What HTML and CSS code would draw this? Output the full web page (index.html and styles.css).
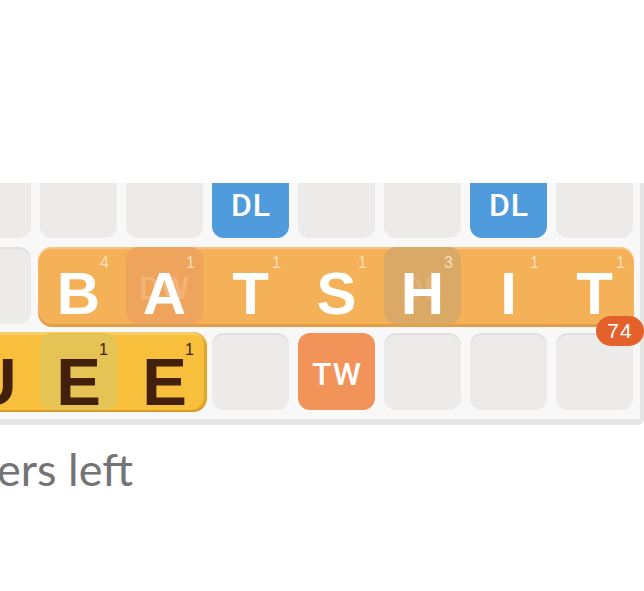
FILE: index.html
```html
<!DOCTYPE html>
<html lang="en">
<head>
<meta charset="utf-8">
<title>Board</title>
<link rel="stylesheet" href="styles.css">
</head>
<body>
<main class="screen">
  <div class="top-space"></div>

  <section class="board-window">
    <div class="board">
      <!-- row 1 -->
      <div class="cell"></div>
      <div class="cell"></div>
      <div class="cell"></div>
      <div class="cell cell--dl cell--top"><span class="cell-label">DL</span></div>
      <div class="cell"></div>
      <div class="cell"></div>
      <div class="cell cell--dl cell--top"><span class="cell-label">DL</span></div>
      <div class="cell"></div>

      <!-- row 2 -->
      <div class="cell"></div>
      <div class="word word--played">
        <div class="tile"><span class="tile-letter">B</span><span class="tile-score">4</span></div>
        <div class="tile tile--dw"><span class="tile-under">DW</span><span class="tile-letter">A</span><span class="tile-score">1</span></div>
        <div class="tile"><span class="tile-letter">T</span><span class="tile-score">1</span></div>
        <div class="tile"><span class="tile-letter">S</span><span class="tile-score">1</span></div>
        <div class="tile tile--dl"><span class="tile-under">DL</span><span class="tile-letter">H</span><span class="tile-score">3</span></div>
        <div class="tile"><span class="tile-letter">I</span><span class="tile-score">1</span></div>
        <div class="tile"><span class="tile-letter">T</span><span class="tile-score">1</span></div>
        <span class="word-score">74</span>
      </div>

      <!-- row 3 -->
      <div class="word word--pending">
        <div class="tile"><span class="tile-letter">U</span></div>
        <div class="tile tile--dl"><span class="tile-letter">E</span><span class="tile-score">1</span></div>
        <div class="tile"><span class="tile-letter">E</span><span class="tile-score">1</span></div>
      </div>
      <div class="cell"></div>
      <div class="cell cell--tw"><span class="cell-label">TW</span></div>
      <div class="cell"></div>
      <div class="cell"></div>
      <div class="cell"></div>
    </div>
  </section>

  <p class="letters-left">ers left</p>
</main>
</body>
</html>
```

FILE: styles.css
```css
* {
  box-sizing: border-box;
}

html,
body {
  margin: 0;
  padding: 0;
  background: #ffffff;
}

body {
  width: 644px;
  height: 591px;
  overflow: hidden;
  font-family: "Liberation Sans", Arial, sans-serif;
}

.screen {
  display: flex;
  flex-direction: column;
}

.top-space {
  height: 183px;
  background: #ffffff;
}

/* visible slice of the game board */
.board-window {
  overflow: hidden;
}

.board {
  margin-top: -22px;
  margin-left: -55px;
  width: 699px;
  padding: 0 7px 9px 9px;
  background: #f8f8f8;
  border-right: 4px solid #e5e5e5;
  border-bottom: 6px solid #e6e6e6;
  border-bottom-right-radius: 6px;
  display: grid;
  grid-template-columns: repeat(8, 77px);
  grid-template-rows: repeat(3, 77px);
  gap: 9px;
}

.cell {
  border-radius: 12px;
  background: #ecebe9;
  box-shadow: inset 0 2px 1px rgba(0, 0, 0, 0.05);
  display: flex;
  align-items: center;
  justify-content: center;
}

.cell--dl {
  background: #4f9bdb;
  box-shadow: none;
}

.cell--tw {
  background: #f2935a;
  box-shadow: none;
}

.cell-label {
  margin-top: 4px;
  font-family: Roboto, "Liberation Sans", sans-serif;
  font-weight: 500;
  font-size: 32px;
  line-height: 1;
  letter-spacing: 1px;
  padding-left: 1px;
  color: #ffffff;
}

.cell--top .cell-label {
  margin-top: 10px;
}

/* words laid on the board */
.word {
  position: relative;
  display: grid;
  grid-template-columns: repeat(var(--len), 77px);
  grid-template-rows: 77px;
  gap: 9px;
  border-radius: 14px;
}

.word--played {
  --len: 7;
  grid-column: span 7;
  margin: 0 -1px 0 -2px;
  padding: 0 1px 0 2px;
  background: #f5b158;
  box-shadow: inset 0 2px 0 rgba(255, 255, 255, 0.25), 0 3px 0 #e39d47;
}

.word--pending {
  --len: 3;
  grid-column: span 3;
  margin: -1px -4px 0 0;
  padding: 1px 4px 0 0;
  background: #f7bf3c;
  box-shadow: inset 0 3px 0 rgba(255, 255, 255, 0.25), inset -3px 0 0 #e2a52a, 0 2px 0 #d99a22;
}

.tile {
  position: relative;
  height: 77px;
  display: flex;
  justify-content: center;
  border-radius: 12px;
}

.tile-letter {
  position: relative;
  font-weight: 700;
  font-size: 60px;
  line-height: 60px;
  padding-top: 17px;
  color: #ffffff;
}

.tile-score {
  position: absolute;
  top: 8px;
  right: 8px;
  font-size: 16px;
  line-height: 1;
  color: rgba(255, 240, 220, 0.75);
}

.tile-under {
  position: absolute;
  inset: 0;
  display: flex;
  align-items: center;
  justify-content: center;
  padding-top: 4px;
  font-family: Roboto, "Liberation Sans", sans-serif;
  font-weight: 500;
  font-size: 32px;
  letter-spacing: 1px;
}

.word--played .tile--dw {
  background: #eea45d;
}

.word--played .tile--dw .tile-under {
  color: #f3b577;
}

.word--played .tile--dl {
  background: #d9a965;
}

.word--played .tile--dl .tile-under {
  color: #e0b378;
}

.word--pending .tile--dl {
  background: #e6c355;
}

.word--pending .tile-letter {
  font-size: 67px;
  line-height: 56px;
  padding-top: 21px;
  color: #43200c;
}

.word--pending .tile-score {
  top: 9px;
  right: 9px;
  color: #43200c;
}

.word-score {
  position: absolute;
  right: -10px;
  bottom: -22px;
  height: 30px;
  min-width: 48px;
  padding: 0 8px;
  border-radius: 15px;
  background: #e5612b;
  color: #ffffff;
  font-size: 21px;
  line-height: 30px;
  letter-spacing: 1px;
  text-align: center;
}

.letters-left {
  margin: 22px 0 0 -3px;
  font-family: Lato, "Open Sans", sans-serif;
  font-weight: 400;
  font-size: 45px;
  line-height: 45px;
  color: #747474;
}
```
